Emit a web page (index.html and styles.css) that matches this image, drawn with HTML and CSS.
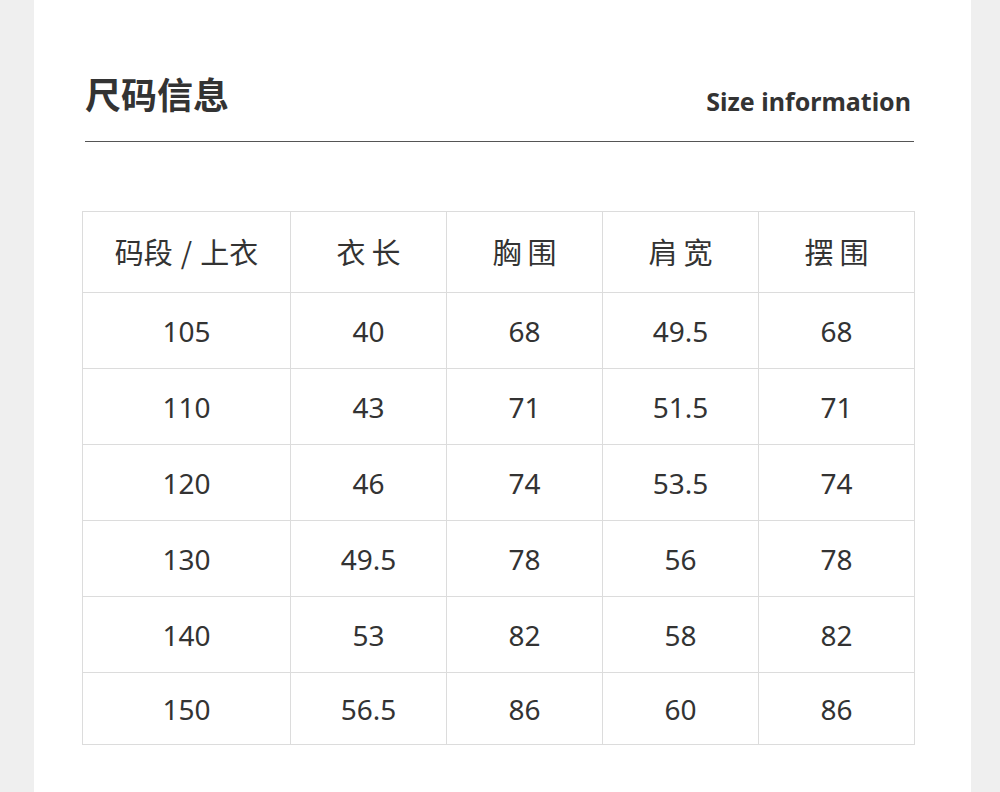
FILE: index.html
```html
<!DOCTYPE html>
<html lang="zh">
<head>
<meta charset="utf-8">
<title>尺码信息</title>
<link rel="stylesheet" href="styles.css">
</head>
<body>
<div class="panel">
  <div class="header">
    <h1 class="title">尺码信息</h1>
    <div class="sub">Size information</div>
  </div>
  <div class="grid">
    <div class="cell head first">码段<span class="slash">/</span>上衣</div>
    <div class="cell head">衣长</div>
    <div class="cell head">胸围</div>
    <div class="cell head">肩宽</div>
    <div class="cell head">摆围</div>

    <div class="cell">105</div><div class="cell">40</div><div class="cell">68</div><div class="cell">49.5</div><div class="cell">68</div>
    <div class="cell">110</div><div class="cell">43</div><div class="cell">71</div><div class="cell">51.5</div><div class="cell">71</div>
    <div class="cell">120</div><div class="cell">46</div><div class="cell">74</div><div class="cell">53.5</div><div class="cell">74</div>
    <div class="cell">130</div><div class="cell">49.5</div><div class="cell">78</div><div class="cell">56</div><div class="cell">78</div>
    <div class="cell">140</div><div class="cell">53</div><div class="cell">82</div><div class="cell">58</div><div class="cell">82</div>
    <div class="cell">150</div><div class="cell">56.5</div><div class="cell">86</div><div class="cell">60</div><div class="cell">86</div>
  </div>
</div>
</body>
</html>
```
FILE: styles.css
```css
html, body {
  margin: 0;
  padding: 0;
}
body {
  background: #efefef;
  font-family: "Noto Sans", "Noto Sans CJK SC", sans-serif;
  color: #333;
  padding-left: 34px;
  height: 792px;
  overflow: hidden;
}
.panel {
  width: 937px;
  height: 792px;
  background: #fff;
  box-sizing: border-box;
  padding-left: 48px;
  padding-right: 57px;
}
.header {
  margin-left: 3px;
  padding-top: 75px;
  padding-bottom: 30px;
  border-bottom: 1px solid #555;
  display: flex;
  justify-content: space-between;
  align-items: flex-end;
}
.title {
  margin: 0;
  font-family: "Noto Sans CJK SC", sans-serif;
  font-size: 36px;
  line-height: 36px;
  font-weight: 700;
  color: #333;
}
.sub {
  font-family: "Noto Sans", sans-serif;
  font-size: 25px;
  line-height: 25px;
  font-weight: 700;
  color: #333;
  margin-right: 3px;
  margin-bottom: -3px;
}
.grid {
  margin-top: 69px;
  display: grid;
  grid-template-columns: 208px 156px 156px 156px 156px;
  grid-template-rows: 81px 76px 76px 76px 76px 76px 72px;
  width: 833px;
  box-sizing: border-box;
  border-top: 1px solid #dcdcdc;
  border-left: 1px solid #dcdcdc;
}
.cell {
  box-sizing: border-box;
  border-right: 1px solid #dcdcdc;
  border-bottom: 1px solid #dcdcdc;
  display: flex;
  align-items: center;
  justify-content: center;
  font-size: 28px;
  color: #333;
}
.head {
  font-family: "Noto Sans CJK SC", sans-serif;
  font-size: 29px;
  letter-spacing: 6px;
  padding-left: 6px;
  padding-bottom: 3px;
}
.head.first {
  letter-spacing: 0;
  padding-left: 0;
}
.slash {
  margin: 0 8px;
}
```
